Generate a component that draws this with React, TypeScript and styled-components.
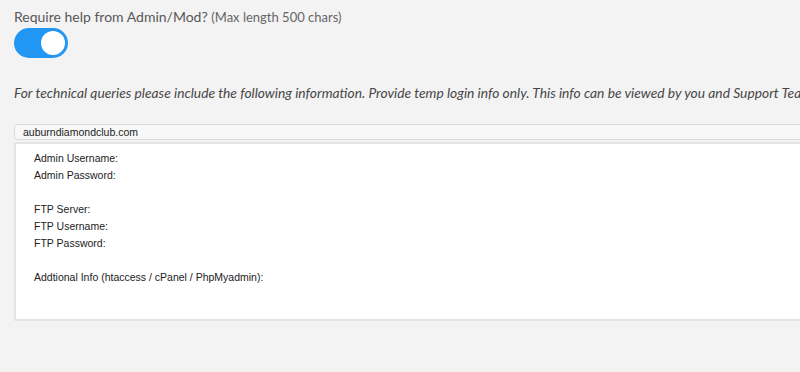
import React, { useState } from "react";
import styled, { createGlobalStyle } from "styled-components";

const Global = createGlobalStyle`
  html, body { margin: 0; padding: 0; background: #f3f3f3; overflow: hidden; }
  body { font-family: "Lato", "Open Sans", sans-serif; }
`;

const Page = styled.div`
  width: 800px;
  height: 372px;
  background: #f3f3f3;
  padding: 8px 0 0 14px;
  box-sizing: border-box;
  overflow: hidden;
`;

const Label = styled.div`
  font-family: "Lato", "Open Sans", sans-serif;
  font-size: 14px;
  color: #585858;
  line-height: 18px;
  white-space: nowrap;
`;

const Hint = styled.span`
  font-size: 13px;
  color: #666;
`;

const Track = styled.button<{ $on: boolean }>`
  display: flex;
  align-items: center;
  justify-content: ${(p) => (p.$on ? "flex-end" : "flex-start")};
  width: 54px;
  height: 30px;
  margin-top: 2px;
  padding: 0 3px;
  border: none;
  border-radius: 15px;
  background: ${(p) => (p.$on ? "#2196f3" : "#ccc")};
  box-sizing: border-box;
  cursor: pointer;
`;

const Knob = styled.span`
  width: 24px;
  height: 24px;
  border-radius: 50%;
  background: #fff;
`;

const Note = styled.p`
  margin: 27px 0 0;
  font-family: "Lato", "Open Sans", sans-serif;
  font-style: italic;
  font-size: 13.8px;
  line-height: 16px;
  color: #474747;
  white-space: nowrap;
`;

const Field = styled.div`
  margin-top: 23px;
  display: flex;
  flex-direction: column;
  gap: 2px;
  width: 800px;
`;

const Site = styled.div`
  height: 16px;
  box-sizing: border-box;
  border: 1px solid #dcdcdc;
  border-radius: 3px;
  background: #f8f8f8;
  padding: 0 8px;
  font-family: "Liberation Sans", Arial, sans-serif;
  font-size: 10.5px;
  line-height: 14px;
  color: #222;
`;

const Area = styled.div`
  height: 179px;
  box-sizing: border-box;
  border: 2px solid #e4e4e4;
  border-right: none;
  border-radius: 2px;
  background: #fff;
  padding: 6px 0 0 18px;
  font-family: "Liberation Sans", Arial, sans-serif;
  font-size: 10.5px;
  line-height: 17px;
  color: #222;
`;

const Line = styled.div`
  height: 17px;
  white-space: nowrap;
`;

const lines = [
  "Admin Username:",
  "Admin Password:",
  "",
  "FTP Server:",
  "FTP Username:",
  "FTP Password:",
  "",
  "Addtional Info (htaccess / cPanel / PhpMyadmin):",
];

export default function App() {
  const [on, setOn] = useState(true);
  return (
    <Page>
      <Global />
      <Label>
        Require help from Admin/Mod? <Hint>(Max length 500 chars)</Hint>
      </Label>
      <Track $on={on} onClick={() => setOn(!on)} aria-label="toggle">
        <Knob />
      </Track>
      <Note>
        For technical queries please include the following information. Provide temp login info only. This info can be viewed by you and Support Team only.
      </Note>
      <Field>
        <Site>auburndiamondclub.com</Site>
        <Area>
          {lines.map((l, i) => (
            <Line key={i}>{l}</Line>
          ))}
        </Area>
      </Field>
    </Page>
  );
}
